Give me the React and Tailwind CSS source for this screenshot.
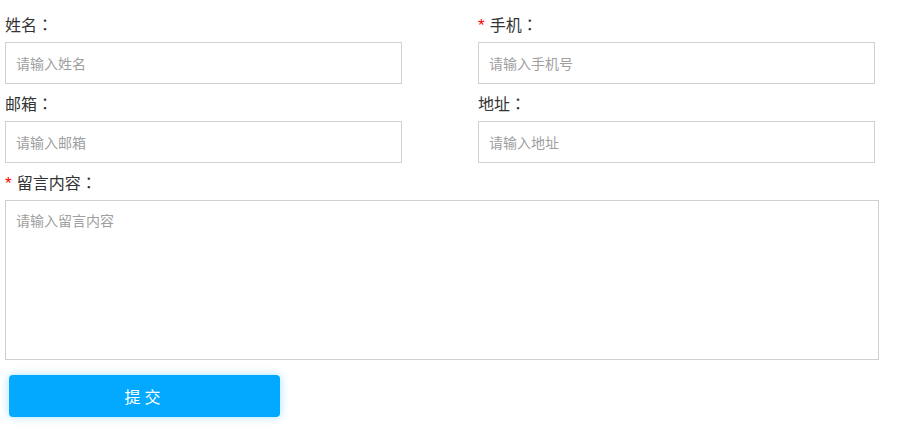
import React from 'react';

function Label({ text, required }) {
  return (
    <div className="h-6 leading-6 text-[16px] text-[#333] mb-[6px]">
      {required && (
        <span className="text-[#f00] text-[17px] mr-[5px]" style={{ fontFamily: '"Liberation Sans", sans-serif' }}>*</span>
      )}
      {text}
      <span style={{ fontFamily: '"Noto Sans CJK JP", sans-serif' }}>：</span>
    </div>
  );
}

function Field({ label, required, placeholder }) {
  return (
    <div>
      <Label text={label} required={required} />
      <input
        className="block w-[397px] h-[42px] border border-[#d0d0d0] px-[10px] text-[14px] text-[#333] placeholder:text-[#a0a0a0] outline-none"
        placeholder={placeholder}
      />
    </div>
  );
}

export default function App() {
  return (
    <div
      className="bg-white w-[921px] h-[442px] pt-3 pl-[5px]"
      style={{ fontFamily: '"Noto Sans CJK SC", "Noto Sans", sans-serif' }}
    >
      <div className="flex gap-[76px]">
        <Field label="姓名" placeholder="请输入姓名" />
        <Field label="手机" required placeholder="请输入手机号" />
      </div>
      <div className="flex gap-[76px] mt-[7px]">
        <Field label="邮箱" placeholder="请输入邮箱" />
        <Field label="地址" placeholder="请输入地址" />
      </div>
      <div className="mt-[7px]">
        <Label text="留言内容" required />
        <textarea
          className="block w-[874px] h-[160px] border border-[#d0d0d0] px-[10px] py-[9px] text-[14px] text-[#333] placeholder:text-[#a0a0a0] outline-none resize-none"
          placeholder="请输入留言内容"
        />
      </div>
      <button className="mt-[15px] ml-1 w-[271px] h-[42px] rounded-[4px] bg-[#02a9ff] text-white text-[16px] tracking-[4px] shadow-[0_0_10px_rgba(0,170,255,0.35)]">
        提交
      </button>
    </div>
  );
}
